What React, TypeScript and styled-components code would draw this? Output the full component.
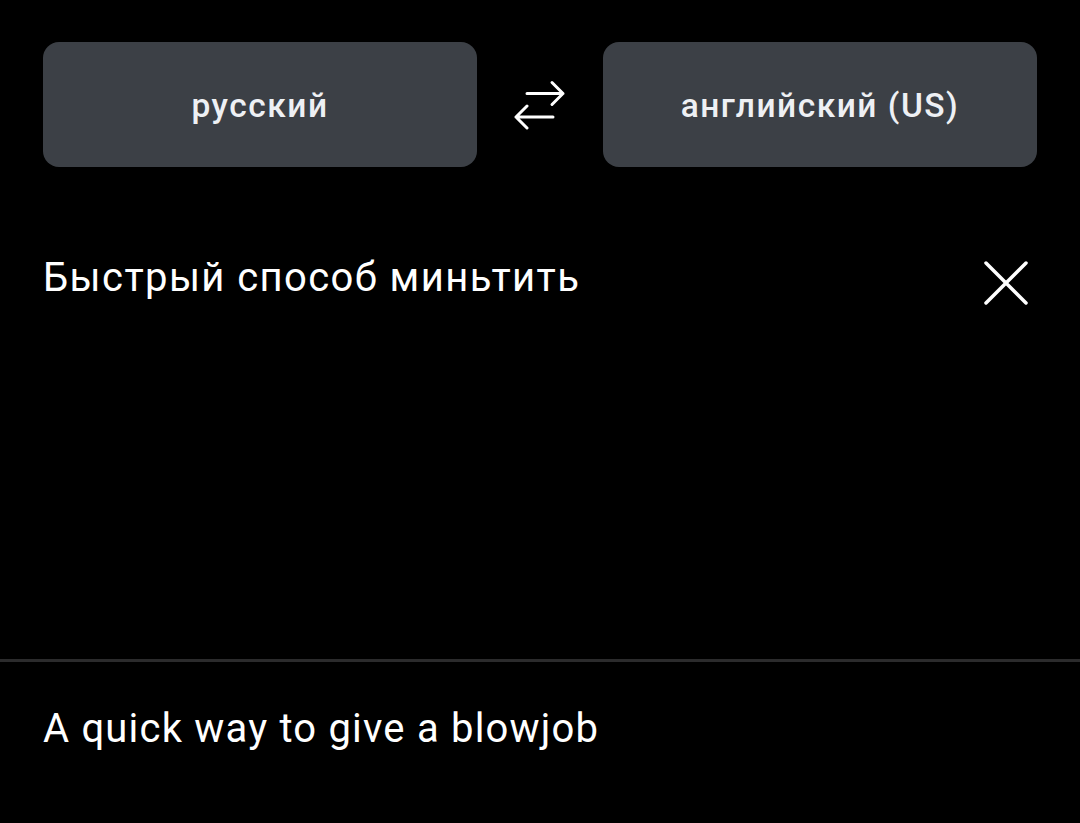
import React from "react";
import styled, { createGlobalStyle } from "styled-components";

const Global = createGlobalStyle`
  html, body { margin: 0; padding: 0; background: #000; }
  body { font-family: Roboto, "Noto Sans", sans-serif; color: #fff; }
`;

const Page = styled.div`
  width: 1080px;
  height: 823px;
  background: #000;
  display: flex;
  flex-direction: column;
  overflow: hidden;
`;

const LangBar = styled.div`
  display: grid;
  grid-template-columns: 434px 1fr 434px;
  align-items: center;
  padding: 42px 43px 0 43px;
  height: 125px;
`;

const LangButton = styled.button`
  height: 125px;
  border: none;
  border-radius: 16px;
  background: #3c4046;
  color: #eef0f4;
  font-family: Roboto, sans-serif;
  font-weight: 500;
  font-size: 33.5px;
  letter-spacing: 1.5px;
  display: flex;
  align-items: center;
  justify-content: center;
  padding: 2px 0 0 0;
`;

const SwapBox = styled.div`
  display: flex;
  justify-content: center;
  align-items: center;
`;

const SourceArea = styled.div`
  display: flex;
  justify-content: space-between;
  align-items: flex-start;
  padding: 0 43px 0 43px;
  margin-top: 85px;
  height: 407px;
`;

const SourceText = styled.div`
  font-size: 40px;
  font-weight: 400;
  letter-spacing: 1.4px;
  line-height: 52px;
  color: #fff;
`;

const CloseBtn = styled.div`
  width: 52px;
  height: 52px;
  display: flex;
  align-items: center;
  justify-content: center;
  margin: 5px 5px 0 0;
`;

const Divider = styled.div`
  height: 3px;
  background: #2b2b2c;
  width: 100%;
`;

const TargetText = styled.div`
  padding: 41px 43px 0 43px;
  font-size: 40px;
  letter-spacing: 1.2px;
  line-height: 52px;
  font-weight: 400;
  color: #fff;
`;

export default function App() {
  return (
    <Page>
      <Global />
      <LangBar>
        <LangButton>русский</LangButton>
        <SwapBox>
          <svg width="56" height="50" viewBox="0 0 56 50" fill="none" stroke="#fff" strokeWidth="3" strokeLinecap="round" strokeLinejoin="round">
            <path d="M15 13.5 H51 M40 2.5 L51 13.5 L40 24.5" />
            <path d="M41 37 H4 M15 26 L4 37 L15 48" />
          </svg>
        </SwapBox>
        <LangButton>английский (US)</LangButton>
      </LangBar>
      <SourceArea>
        <SourceText>Быстрый способ миньтить</SourceText>
        <CloseBtn>
          <svg width="44" height="44" viewBox="0 0 44 44" fill="none" stroke="#fff" strokeWidth="3.5" strokeLinecap="round">
            <path d="M2 2 L42 42 M42 2 L2 42" />
          </svg>
        </CloseBtn>
      </SourceArea>
      <Divider />
      <TargetText>A quick way to give a blowjob</TargetText>
    </Page>
  );
}
